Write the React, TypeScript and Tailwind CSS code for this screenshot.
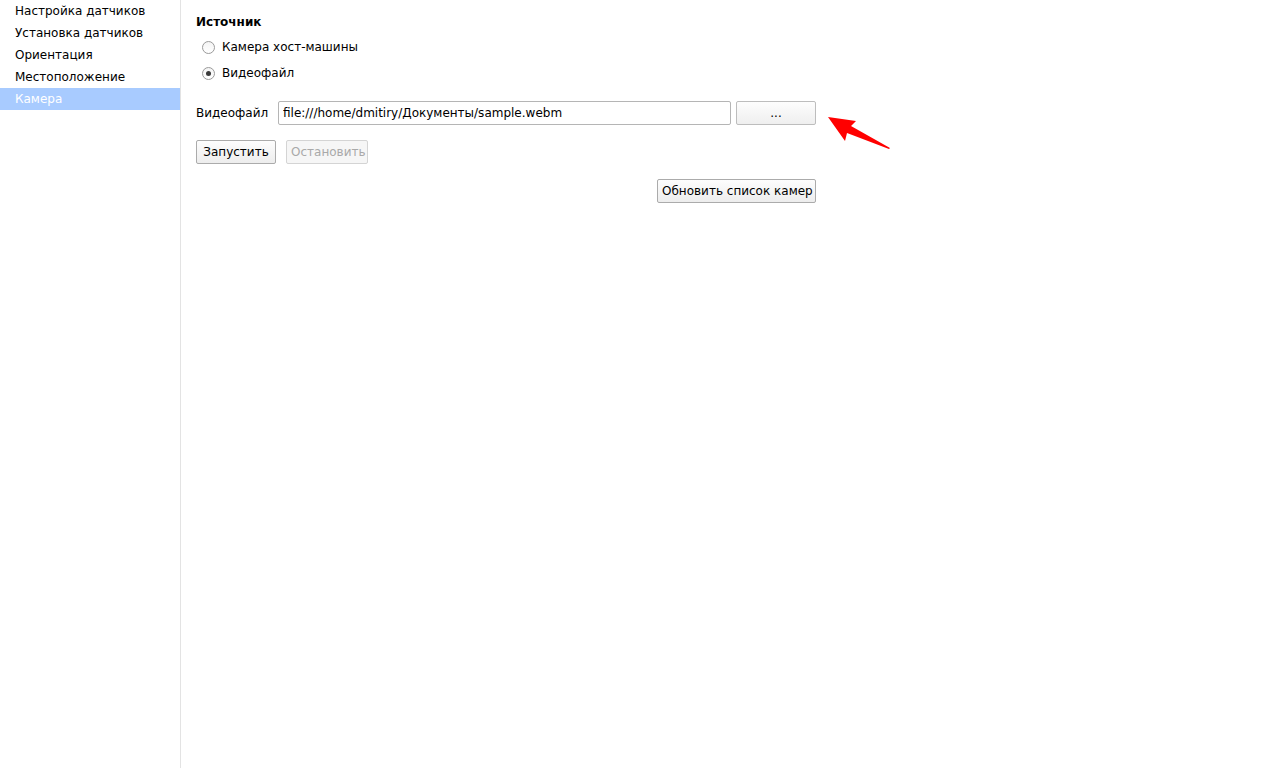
import { useState } from 'react'

const sections = ['Настройка датчиков', 'Установка датчиков', 'Ориентация', 'Местоположение', 'Камера']

function Radio({ checked, label, onClick }: { checked: boolean; label: string; onClick: () => void }) {
  return (
    <button type="button" onClick={onClick} className="flex items-center h-[26px] pl-[6px] gap-[7px] cursor-default">
      <span className="w-[13px] h-[13px] rounded-full border border-[#9a9a9a] bg-gradient-to-b from-[#f4f4f4] to-white flex items-center justify-center">
        {checked && <span className="w-[5px] h-[5px] rounded-full bg-[#3a3a3a]" />}
      </span>
      <span>{label}</span>
    </button>
  )
}

function PushButton({ children, disabled, className = '' }: { children: React.ReactNode; disabled?: boolean; className?: string }) {
  const tone = disabled
    ? 'border-[#d4d4d4] text-[#a9a9a9] bg-[#f6f6f6]'
    : 'border-[#ababab] text-black bg-gradient-to-b from-[#fdfdfd] to-[#ededed]'
  return (
    <button
      type="button"
      disabled={disabled}
      className={`h-[24px] px-[4px] border rounded-[2px] leading-none whitespace-nowrap ${tone} ${className}`}
    >
      {children}
    </button>
  )
}

export default function App() {
  const [source, setSource] = useState<'host' | 'file'>('file')

  return (
    <div className="relative flex h-[768px] bg-white text-[12px] text-black font-['DejaVu_Sans',sans-serif]">
      <div className="w-[181px] shrink-0 border-r border-[#e3e3e3]">
        {sections.map((s) => (
          <div
            key={s}
            className={`h-[22px] pl-[15px] flex items-center ${s === 'Камера' ? 'bg-[#a8cbff] text-white' : ''}`}
          >
            {s}
          </div>
        ))}
      </div>

      <div className="pl-[15px] pt-[14px]">
        <div className="w-[620px] flex flex-col">
          <div className="font-bold h-[16px] leading-[16px]">Источник</div>
          <div className="mt-[4px] flex flex-col">
            <Radio checked={source === 'host'} label="Камера хост-машины" onClick={() => setSource('host')} />
            <Radio checked={source === 'file'} label="Видеофайл" onClick={() => setSource('file')} />
          </div>

          <div className="mt-[15px] flex items-center">
            <span className="w-[82px] shrink-0">Видеофайл</span>
            <input
              readOnly
              value="file:///home/dmitiry/Документы/sample.webm"
              className="w-[453px] h-[24px] px-[4px] border border-[#b5b5b5] rounded-[2px] outline-none"
            />
            <PushButton className="ml-[5px] w-[80px] bg-gradient-to-b from-[#fafafa] to-[#efefef] border-[#bdbdbd]">...</PushButton>
          </div>

          <div className="mt-[15px] flex gap-[10px]">
            <PushButton className="w-[80px]">Запустить</PushButton>
            <PushButton disabled className="w-[82px]">Остановить</PushButton>
          </div>

          <div className="mt-[15px] flex justify-end">
            <PushButton className="w-[159px]">Обновить список камер</PushButton>
          </div>
        </div>
      </div>

      {/* red pointer next to the browse button */}
      <svg className="absolute left-[820px] top-[108px]" width="80" height="46" viewBox="0 0 80 46">
        <polygon points="8,9 36,13 31,18 70,40 69,41 27,25 25,33" fill="#ff0000" />
      </svg>
    </div>
  )
}
